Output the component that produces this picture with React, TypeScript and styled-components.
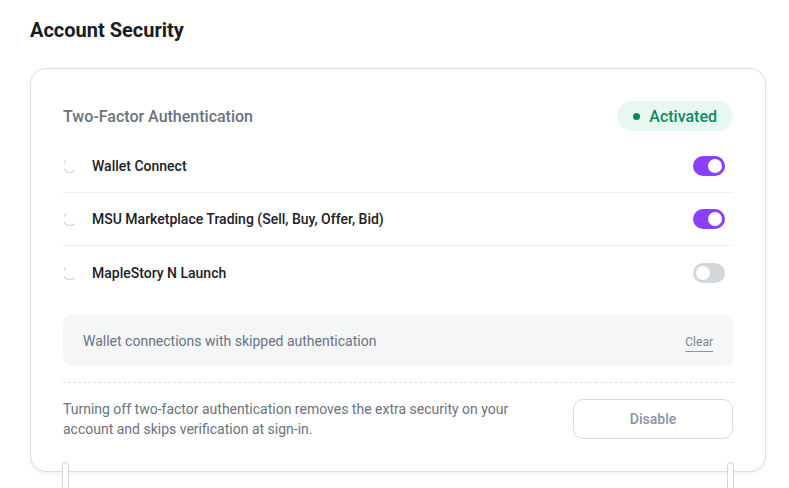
import React from "react";
import styled, { createGlobalStyle } from "styled-components";

const GlobalStyle = createGlobalStyle`
  html, body {
    margin: 0;
    padding: 0;
    background: #ffffff;
    font-family: Roboto, "Noto Sans", Arial, sans-serif;
    -webkit-font-smoothing: antialiased;
  }
  * { box-sizing: border-box; }
`;

const Page = styled.div`
  padding: 18px 23px 0 30px;
`;

const Title = styled.h1`
  margin: 0 0 26px;
  font-size: 20px;
  line-height: 24px;
  font-weight: 700;
  color: #1b1d21;
`;

const Card = styled.section`
  position: relative;
  border: 1px solid #dcdee2;
  border-radius: 16px;
  padding: 31px 32px 32px 32px;
  background: #fff;
  box-shadow: 0 2px 4px rgba(0, 0, 0, 0.06);
`;

const PillarRow = styled.div`
  position: relative;
  z-index: 2;
  display: flex;
  justify-content: space-between;
  margin-top: -10px;
  padding: 0 32px;
  height: 40px;
`;

const Pillar = styled.div`
  width: 7px;
  height: 100%;
  background: #fff;
  border: 1px solid #d3d6da;
  border-bottom: none;
  border-radius: 4px 4px 0 0;
`;

const Header = styled.div`
  display: flex;
  align-items: center;
  justify-content: space-between;
  height: 32px;
  margin-bottom: 8px;
`;

const SectionTitle = styled.h2`
  margin: 0;
  font-size: 16px;
  font-weight: 500;
  color: #6b7280;
`;

const Badge = styled.span`
  display: inline-flex;
  align-items: center;
  gap: 9px;
  height: 30px;
  padding: 0 16px 0 16px;
  border-radius: 15px;
  background: #e7f8f1;
  color: #0c8a5f;
  font-size: 16px;
  font-weight: 500;
`;

const Dot = styled.span`
  width: 7px;
  height: 7px;
  border-radius: 50%;
  background: #0c8a5f;
`;

const List = styled.ul`
  list-style: none;
  margin: 0;
  padding: 0;
`;

const Row = styled.li`
  display: flex;
  align-items: center;
  height: 53px;
  border-bottom: 1px solid #eeeff1;
  &:last-child {
    border-bottom: none;
  }
`;

const RowIcon = styled.svg`
  width: 14px;
  height: 14px;
  margin: 0 14px 0 1px;
  flex: none;
`;

const RowLabel = styled.span`
  flex: 1;
  font-size: 14px;
  font-weight: 500;
  color: #1d2027;
`;

const Toggle = styled.span<{ $on: boolean }>`
  position: relative;
  width: 32px;
  height: 20px;
  margin-right: 8px;
  border-radius: 10px;
  background: ${(p) => (p.$on ? "#8a3ffc" : "#d3d6db")};
  &::after {
    content: "";
    position: absolute;
    top: 3px;
    left: ${(p) => (p.$on ? "15px" : "3px")};
    width: 14px;
    height: 14px;
    border-radius: 50%;
    background: #fff;
  }
`;

const SkipBox = styled.div`
  display: flex;
  align-items: center;
  justify-content: space-between;
  height: 51px;
  margin-top: 16px;
  padding: 0 20px;
  border-radius: 8px;
  background: #f5f6f8;
`;

const SkipText = styled.span`
  font-size: 14px;
  color: #6b7280;
`;

const ClearLink = styled.button`
  border: none;
  background: none;
  padding: 0;
  margin-top: 2px;
  font-family: inherit;
  font-size: 12px;
  color: #7b8494;
  text-decoration: underline;
  text-underline-offset: 5px;
  text-decoration-color: #8a93a3;
  cursor: pointer;
`;

const Divider = styled.hr`
  margin: 16px 0 16px;
  border: none;
  border-top: 1px dashed #dcdee2;
`;

const Footer = styled.div`
  display: flex;
  align-items: center;
  justify-content: space-between;
  gap: 24px;
`;

const FooterText = styled.p`
  margin: 0;
  max-width: 460px;
  font-size: 14px;
  line-height: 20px;
  color: #6b7280;
`;

const DisableButton = styled.button`
  width: 160px;
  height: 40px;
  flex: none;
  border: 1px solid #d9dce1;
  border-radius: 10px;
  background: #fff;
  font-family: inherit;
  font-size: 14px;
  font-weight: 500;
  color: #8a94a6;
  cursor: pointer;
`;

// Small loading arc shown before each protected action
const Spinner = () => (
  <RowIcon viewBox="0 0 14 14" aria-hidden>
    <path
      d="M1.5 2 A6 6 0 0 0 10 12"
      fill="none"
      stroke="#d6d9de"
      strokeWidth="1.3"
      strokeLinecap="round"
    />
  </RowIcon>
);

const items = [
  { label: "Wallet Connect", on: true },
  { label: "MSU Marketplace Trading (Sell, Buy, Offer, Bid)", on: true },
  { label: "MapleStory N Launch", on: false },
];

export default function App() {
  return (
    <>
      <GlobalStyle />
      <Page>
        <Title>Account Security</Title>
        <Card>
          <Header>
            <SectionTitle>Two-Factor Authentication</SectionTitle>
            <Badge>
              <Dot />
              Activated
            </Badge>
          </Header>
          <List>
            {items.map((it) => (
              <Row key={it.label}>
                <Spinner />
                <RowLabel>{it.label}</RowLabel>
                <Toggle $on={it.on} />
              </Row>
            ))}
          </List>
          <SkipBox>
            <SkipText>Wallet connections with skipped authentication</SkipText>
            <ClearLink>Clear</ClearLink>
          </SkipBox>
          <Divider />
          <Footer>
            <FooterText>
              Turning off two-factor authentication removes the extra security on your
              account and skips verification at sign-in.
            </FooterText>
            <DisableButton>Disable</DisableButton>
          </Footer>
        </Card>
        <PillarRow>
          <Pillar />
          <Pillar />
        </PillarRow>
      </Page>
    </>
  );
}
